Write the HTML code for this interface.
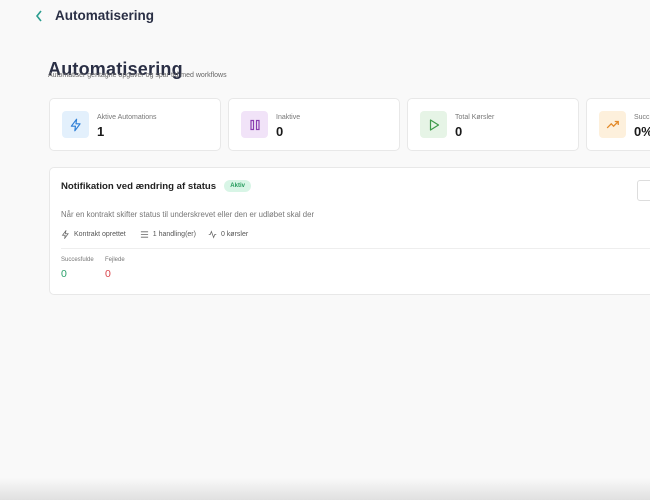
<!DOCTYPE html>
<html><head><meta charset="utf-8"><style>
*{margin:0;padding:0;box-sizing:border-box}
body{width:650px;height:500px;overflow:hidden;background:#f9f9f9;font-family:"Liberation Sans",sans-serif;position:relative;color:#1f2433}
.a{position:absolute}
.card{position:absolute;background:#fff;border:1px solid #e8e8e8;border-radius:5px}
.ib{position:absolute;left:12px;top:12px;width:27px;height:27px;border-radius:4px;display:flex;align-items:center;justify-content:center}
.lbl{position:absolute;left:47px;top:15px;font-size:7px;color:#777}
.val{position:absolute;left:47px;top:25px;font-size:13px;font-weight:bold;color:#1a1a1a}
</style></head><body>
<svg class="a" style="left:34px;top:9px" width="10" height="14" viewBox="0 0 10 14"><path d="M7 2L3 7l4 5" fill="none" stroke="#2a9d8f" stroke-width="1.6"/></svg>
<div class="a" style="left:55px;top:8px;font-size:13.5px;font-weight:bold;color:#2a2f45">Automatisering</div>
<div class="a" style="left:48px;top:59px;font-size:18px;font-weight:bold;color:#2a2f45;letter-spacing:0.2px">Automatisering</div>
<div class="a" style="left:48px;top:72px;font-size:7px;color:#666">Automatiser gentagne opgaver og spar tid med workflows</div>

<div class="card" style="left:49px;top:98px;width:172px;height:53px"><div class="ib" style="background:#e3f0fc"><svg width="14" height="14" viewBox="0 0 24 24"><path d="M13 2L4 14h7l-1 8 9-12h-7z" fill="none" stroke="#2f7fd6" stroke-width="2" stroke-linejoin="round"/></svg></div><div class="lbl">Aktive Automations</div><div class="val">1</div></div>
<div class="card" style="left:228px;top:98px;width:172px;height:53px"><div class="ib" style="background:#f1e3f8"><svg width="12" height="12" viewBox="0 0 12 12"><rect x="2" y="1.5" width="2.5" height="9" fill="none" stroke="#8a3bb0" stroke-width="1.2"/><rect x="7.5" y="1.5" width="2.5" height="9" fill="none" stroke="#8a3bb0" stroke-width="1.2"/></svg></div><div class="lbl">Inaktive</div><div class="val">0</div></div>
<div class="card" style="left:407px;top:98px;width:172px;height:53px"><div class="ib" style="background:#e6f4e6"><svg width="14" height="14" viewBox="0 0 14 14"><path d="M3.5 2l8 5-8 5z" fill="none" stroke="#3f9a4a" stroke-width="1.2" stroke-linejoin="round"/></svg></div><div class="lbl">Total Kørsler</div><div class="val">0</div></div>
<div class="card" style="left:586px;top:98px;width:100px;height:53px"><div class="ib" style="background:#fdf0dc"><svg width="14" height="14" viewBox="0 0 24 24"><path d="M2 17l7-7 4 4 8-8M15 6h6v6" fill="none" stroke="#e38a2a" stroke-width="2.2"/></svg></div><div class="lbl">Succ</div><div class="val">0%</div></div>

<div class="card" style="left:49px;top:167px;width:620px;height:128px">
<div class="a" style="left:11px;top:12px;display:flex;align-items:center;gap:8px"><span style="font-size:9.6px;font-weight:bold;color:#222">Notifikation ved ændring af status</span><span style="width:27px;height:12px;border-radius:6px;background:#d8f5e6;color:#249a5b;font-size:6px;font-weight:bold;text-align:center;line-height:12px">Aktiv</span></div>
<div class="a" style="left:587px;top:12px;width:30px;height:21px;border:1px solid #ddd;border-radius:3px;background:#fff"></div>
<div class="a" style="left:11px;top:42px;font-size:7.8px;color:#777">Når en kontrakt skifter status til underskrevet eller den er udløbet skal der</div>
<div class="a" style="left:11px;top:62px;font-size:7px;color:#555;display:flex;align-items:center;gap:4px">
<svg width="9" height="9" viewBox="0 0 24 24"><path d="M13 2L4 14h7l-1 8 9-12h-7z" fill="none" stroke="#666" stroke-width="2"/></svg><span>Kontrakt oprettet</span><span style="width:6px"></span>
<svg width="9" height="9" viewBox="0 0 10 10"><path d="M1 2h8M1 5h8M1 8h8" stroke="#666" stroke-width="0.9"/></svg><span>1 handling(er)</span><span style="width:4px"></span>
<svg width="9" height="9" viewBox="0 0 24 24"><path d="M2 12h4l3-8 6 16 3-8h4" fill="none" stroke="#666" stroke-width="2"/></svg><span>0 kørsler</span></div>
<div class="a" style="left:11px;top:80px;width:600px;height:1px;background:#eee"></div>
<div class="a" style="left:11px;top:89px;font-size:6px;color:#777">Succesfulde</div>
<div class="a" style="left:55px;top:89px;font-size:6px;color:#777">Fejlede</div>
<div class="a" style="left:11px;top:100px;font-size:10.5px;color:#2aa06a">0</div>
<div class="a" style="left:55px;top:100px;font-size:10.5px;color:#d9434a">0</div>
</div>
<div class="a" style="left:0;top:478px;width:650px;height:22px;background:linear-gradient(#f9f9f900,#e0e0e0)"></div>
</body></html>
